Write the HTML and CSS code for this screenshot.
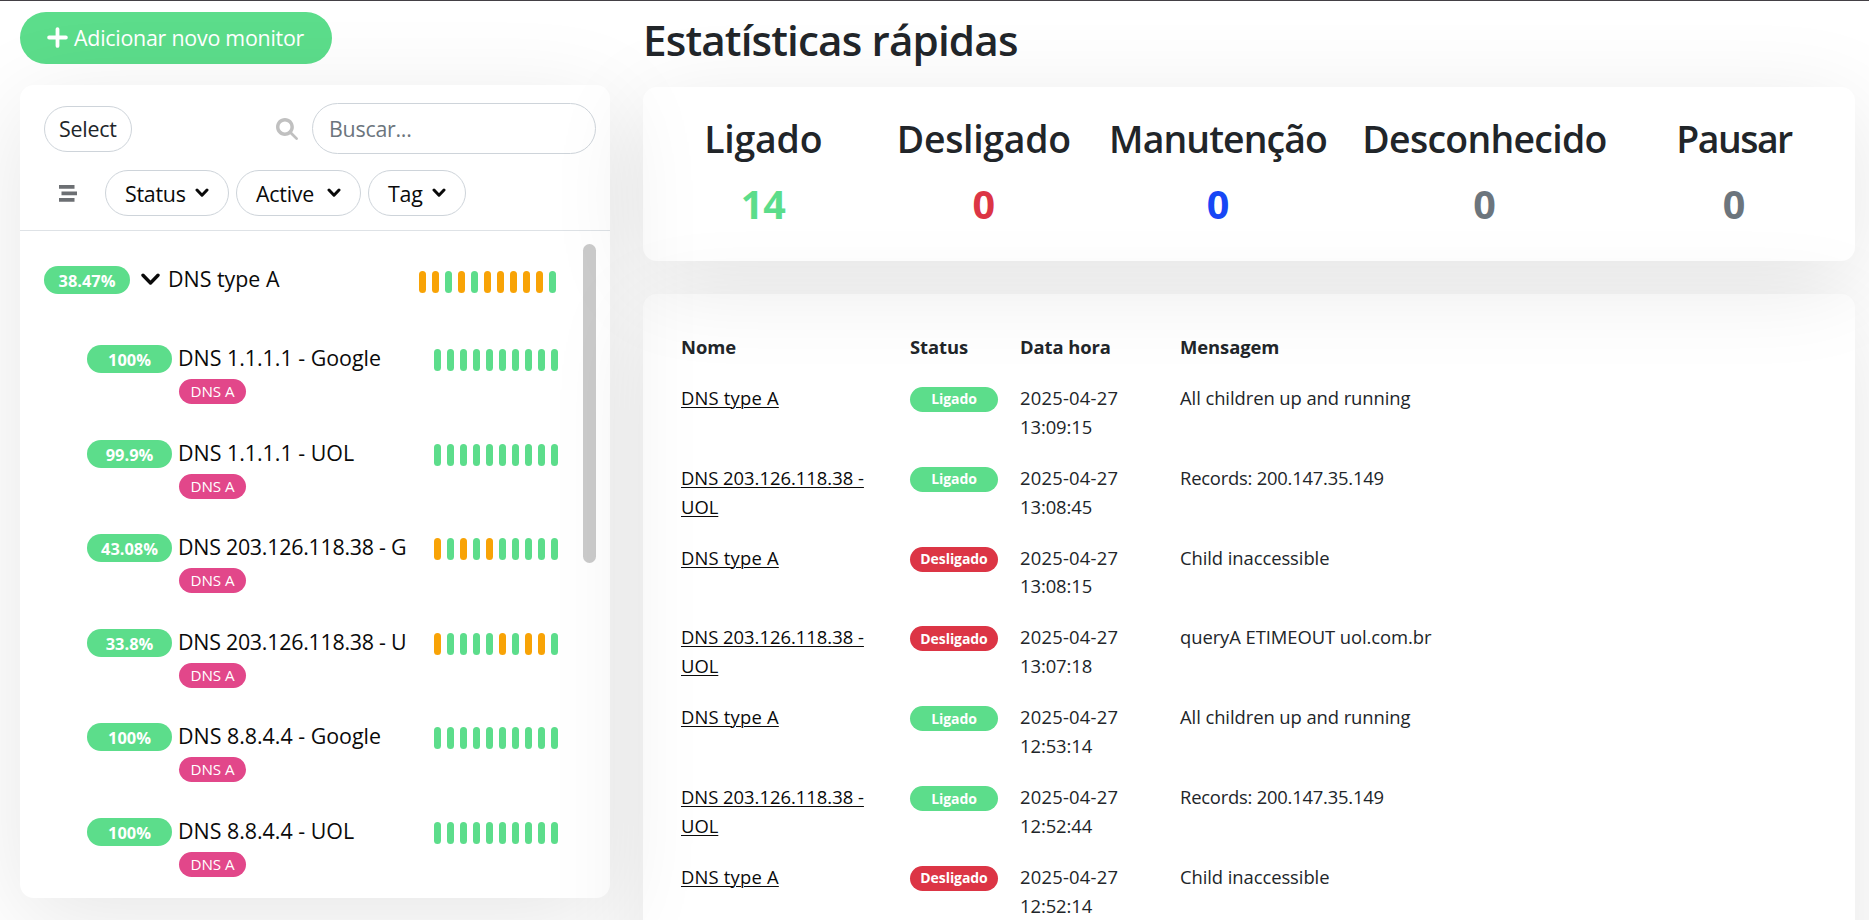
FILE: index.html
```html
<!DOCTYPE html>
<html lang="pt-BR">
<head>
<meta charset="utf-8">
<title>Uptime</title>
<link rel="stylesheet" href="styles.css">
</head>
<body>
<div class="layout">
  <aside class="side">
    <button class="add"><svg class="plus" viewBox="0 0 20 20"><path d="M10 2v16M2 10h16"/></svg><span class="add-text">Adicionar novo monitor</span></button>
    <section class="box monitors">
      <header class="list-header">
        <div class="search-row">
          <button class="chip select"><span>Select</span></button>
          <div class="search">
            <svg class="glass" viewBox="0 0 512 512"><path d="M416 208c0 45.9-14.9 88.3-40 122.7L502.600 457.400c12.500 12.500 12.500 32.800 0 45.300s-32.800 12.500-45.300 0L330.700 376c-34.400 25.200-76.800 40-122.700 40C93.100 416 0 322.900 0 208S93.100 0 208 0s208 93.100 208 208zM208 336a128 128 0 1 0 0-256 128 128 0 1 0 0 256z"/></svg>
            <div class="input"><span>Buscar...</span></div>
          </div>
        </div>
        <div class="filters">
          <svg class="stream" viewBox="0 0 18 17"><path d="M0 0h15.500v3.700H0zM2.500 6.500H18v3.700H2.500zM0 13h15.500v3.700H0z"/></svg>
          <button class="chip status"><span>Status</span><svg class="caret" viewBox="0 0 14 10"><path d="M2 2l5 5.200L12 2"/></svg></button>
          <button class="chip active"><span>Active</span><svg class="caret" viewBox="0 0 14 10"><path d="M2 2l5 5.200L12 2"/></svg></button>
          <button class="chip tag-filter"><span>Tag</span><svg class="caret" viewBox="0 0 14 10"><path d="M2 2l5 5.200L12 2"/></svg></button>
        </div>
      </header>
      <div class="list">
        <div class="items">
          <div class="item group">
            <span class="pct"><span>38.47%</span></span>
            <svg class="fold" viewBox="0 0 19 13"><path d="M2 2.300l7.500 7.700L17 2.300"/></svg>
            <div class="name"><span class="title">DNS type A</span></div>
            <div class="beats"><i class="w"></i><i class="w"></i><i></i><i class="w"></i><i></i><i class="w"></i><i class="w"></i><i class="w"></i><i class="w"></i><i class="w"></i><i></i></div>
          </div>
          <div class="item">
            <span class="pct"><span>100%</span></span>
            <div class="name"><span class="title">DNS 1.1.1.1 - Google</span><span class="tag"><span>DNS A</span></span></div>
            <div class="beats"><i></i><i></i><i></i><i></i><i></i><i></i><i></i><i></i><i></i><i></i></div>
          </div>
          <div class="item">
            <span class="pct"><span>99.9%</span></span>
            <div class="name"><span class="title">DNS 1.1.1.1 - UOL</span><span class="tag"><span>DNS A</span></span></div>
            <div class="beats"><i></i><i></i><i></i><i></i><i></i><i></i><i></i><i></i><i></i><i></i></div>
          </div>
          <div class="item">
            <span class="pct"><span>43.08%</span></span>
            <div class="name"><span class="title long">DNS 203.126.118.38 - G</span><span class="tag"><span>DNS A</span></span></div>
            <div class="beats"><i class="w"></i><i></i><i class="w"></i><i></i><i class="w"></i><i></i><i></i><i></i><i></i><i></i></div>
          </div>
          <div class="item">
            <span class="pct"><span>33.8%</span></span>
            <div class="name"><span class="title long">DNS 203.126.118.38 - U</span><span class="tag"><span>DNS A</span></span></div>
            <div class="beats"><i class="w"></i><i></i><i></i><i></i><i></i><i class="w"></i><i></i><i class="w"></i><i class="w"></i><i></i></div>
          </div>
          <div class="item">
            <span class="pct"><span>100%</span></span>
            <div class="name"><span class="title">DNS 8.8.4.4 - Google</span><span class="tag"><span>DNS A</span></span></div>
            <div class="beats"><i></i><i></i><i></i><i></i><i></i><i></i><i></i><i></i><i></i><i></i></div>
          </div>
          <div class="item">
            <span class="pct"><span>100%</span></span>
            <div class="name"><span class="title">DNS 8.8.4.4 - UOL</span><span class="tag"><span>DNS A</span></span></div>
            <div class="beats"><i></i><i></i><i></i><i></i><i></i><i></i><i></i><i></i><i></i><i></i></div>
          </div>
        </div>
        <div class="scrollbar"></div>
      </div>
    </section>
  </aside>
  <main class="main">
    <h1>Estatísticas rápidas</h1>
    <section class="box stats">
      <div class="stat"><h3 class="s-up">Ligado</h3><span class="num up">14</span></div>
      <div class="stat"><h3 class="s-down">Desligado</h3><span class="num down">0</span></div>
      <div class="stat"><h3 class="s-maint">Manutenção</h3><span class="num maint">0</span></div>
      <div class="stat"><h3 class="s-unknown">Desconhecido</h3><span class="num">0</span></div>
      <div class="stat"><h3 class="s-pause">Pausar</h3><span class="num">0</span></div>
    </section>
    <section class="box events">
      <table>
        <colgroup><col class="c-name"><col class="c-status"><col class="c-date"><col></colgroup>
        <thead><tr><th>Nome</th><th>Status</th><th>Data hora</th><th>Mensagem</th></tr></thead>
        <tbody>
          <tr><td><a>DNS type A</a></td><td><span class="badge">Ligado</span></td><td><span class="day">2025-04-27</span><br>13:09:15</td><td>All children up and running</td></tr>
          <tr><td><a class="wrapped">DNS 203.126.118.38 -<br>UOL</a></td><td><span class="badge">Ligado</span></td><td><span class="day">2025-04-27</span><br>13:08:45</td><td class="records">Records: 200.147.35.149</td></tr>
          <tr><td><a>DNS type A</a></td><td><span class="badge off">Desligado</span></td><td><span class="day">2025-04-27</span><br>13:08:15</td><td>Child inaccessible</td></tr>
          <tr><td><a class="wrapped">DNS 203.126.118.38 -<br>UOL</a></td><td><span class="badge off">Desligado</span></td><td><span class="day">2025-04-27</span><br>13:07:18</td><td>queryA ETIMEOUT uol.com.br</td></tr>
          <tr><td><a>DNS type A</a></td><td><span class="badge">Ligado</span></td><td><span class="day">2025-04-27</span><br>12:53:14</td><td>All children up and running</td></tr>
          <tr><td><a class="wrapped">DNS 203.126.118.38 -<br>UOL</a></td><td><span class="badge">Ligado</span></td><td><span class="day">2025-04-27</span><br>12:52:44</td><td class="records">Records: 200.147.35.149</td></tr>
          <tr><td><a>DNS type A</a></td><td><span class="badge off">Desligado</span></td><td><span class="day">2025-04-27</span><br>12:52:14</td><td>Child inaccessible</td></tr>
        </tbody>
      </table>
    </section>
  </main>
</div>
</body>
</html>
```
FILE: styles.css
```css
* { box-sizing: border-box; }
html { overflow: hidden; }
body {
  margin: 0;
  height: 920px;
  overflow: hidden;
  background: #fff;
  color: #212529;
  font-family: "Open Sans", "Noto Sans", sans-serif;
  font-size: 21.4px;
  border-top: 1px solid #434045;
}
button { font: inherit; color: inherit; background: none; padding: 0; }
h1, h3 { margin: 0; font-weight: 600; white-space: nowrap; }
.layout { display: flex; gap: 33px; padding: 0 14px 0 20px; }
.side { width: 590px; padding-top: 11px; }
.main { width: 1212px; }
.box { border-radius: 14px; box-shadow: 0 20.6px 96px rgba(0, 0, 0, .1); }

.add {
  display: flex;
  align-items: center;
  width: 312px;
  height: 52px;
  padding: 0 0 1px 27px;
  border: 0;
  border-radius: 26px;
  background: #5cdd8b;
  color: #fff;
}
.plus { width: 21px; height: 21px; margin-right: 6px; fill: none; stroke: #fff; stroke-width: 3.6; stroke-linecap: round; }
.add-text { letter-spacing: -.24px; white-space: nowrap; }

.monitors { margin-top: 21px; height: 813px; }
.list-header { height: 146px; padding: 18px 14px 0 24px; border-bottom: 1px solid #dee2e6; letter-spacing: -.25px; }
.search-row { display: flex; justify-content: space-between; align-items: center; height: 51px; }
.search { display: flex; align-items: center; }
.glass { width: 22px; height: 22px; margin-right: 14px; fill: #c0c0c0; }
.input {
  display: flex;
  align-items: center;
  width: 284px;
  height: 51px;
  padding-left: 16px;
  border: 1px solid #ced4da;
  border-radius: 25.500px;
  color: #6c757d;
}
.chip {
  display: flex;
  align-items: center;
  height: 46px;
  border: 1px solid #ced4da;
  border-radius: 23px;
  letter-spacing: -.25px;
  white-space: nowrap;
}
.select { width: 88px; padding-left: 14px; }
.filters { display: flex; align-items: center; gap: 7px; margin-top: 16px; padding-left: 15px; }
.stream { width: 18px; height: 17px; margin-right: 21px; fill: #6c6f73; }
.filters .chip { padding: 0 19px; justify-content: space-between; color: #0a0a0a; }
.status { width: 124px; }
.active { width: 125px; }
.tag-filter { width: 98px; }
.caret { width: 14px; height: 10px; fill: none; stroke: #0a0a0a; stroke-width: 3; stroke-linecap: round; stroke-linejoin: round; }

.list { display: flex; justify-content: space-between; padding: 13px 14px 0 24px; }
.scrollbar { width: 13px; height: 319px; border-radius: 7px; background: #cbcbcb; }
.items { width: 515px; padding-top: 22px; }
.item { display: flex; height: 94.600px; padding-left: 43px; color: #0a0a0a; }
.item.group { height: 79px; padding-left: 0; }
.pct {
  display: flex;
  align-items: center;
  justify-content: center;
  flex: none;
  width: 85px;
  height: 28px;
  padding-top: 1px;
  margin-right: 7px;
  border-radius: 14px;
  background: #5cdd8b;
  color: #fff;
  font-size: 16.400px;
  font-weight: 700;
}
.group .pct { width: 86px; margin-right: 11px; }
.fold { flex: none; width: 19px; height: 13px; margin: 7px 9px 0 0; fill: none; stroke: #0a0a0a; stroke-width: 3.400; stroke-linecap: round; stroke-linejoin: round; }
.name { width: 227px; }
.group .name { width: 237px; }
.title { display: block; height: 34px; line-height: 27px; margin-top: -1px; margin-left: -1px; white-space: nowrap; }
.long { letter-spacing: -.25px; }
.tag {
  display: flex;
  align-items: center;
  justify-content: center;
  width: 67px;
  height: 25px;
  padding-bottom: 1px;
  margin-top: 1px;
  border-radius: 12.500px;
  background: #e2478a;
  color: #fff;
  font-size: 15.200px;
  letter-spacing: -.1px;
}
.beats { display: flex; gap: 6px; margin: 4px 0 0 28px; }
.group .beats { margin: 5px 0 0 13px; }
.beats i { width: 7px; height: 22px; border-radius: 3.500px; background: #5cdd8b; }
.beats .w { background: #f8a306; }

h1 { height: 86px; padding-top: 10px; font-size: 42.200px; line-height: 57px; letter-spacing: -.85px; }
.stats { display: grid; grid-template-columns: 220.500px 220.500px 248px 285px 214px; height: 174px; padding: 27px 0 0 10px; }
.stat { display: flex; flex-direction: column; align-items: center; }
.stat h3 { font-size: 37.400px; line-height: 50px; }
.s-up { letter-spacing: -.2px; }
.s-down { letter-spacing: -.3px; }
.s-maint { letter-spacing: -.9px; }
.s-unknown { letter-spacing: -.7px; }
.s-pause { letter-spacing: -1.500px; }
.num { margin-top: 14px; font-size: 39.500px; line-height: 52px; font-weight: 700; color: #6c757d; }
.up { color: #5cdd8b; }
.down { color: #dc3545; }
.maint { color: #1747f5; }

.events { margin-top: 33px; height: 700px; padding: 28px 27px 0; }
table { width: 100%; table-layout: fixed; border-collapse: collapse; font-size: 18.400px; line-height: 28.900px; letter-spacing: -.07px; }
.c-name { width: 229px; }
.c-status { width: 110px; }
.c-date { width: 160px; }
th, td { padding: 11px 0 11px 11px; text-align: left; vertical-align: top; white-space: nowrap; }
td { height: 79.800px; }
td a { color: #0a0a0a; letter-spacing: .2px; text-decoration: underline; text-underline-offset: 2px; text-decoration-thickness: 1px; }
td a.wrapped { letter-spacing: 0; }
.records { letter-spacing: -.22px; }
.day { letter-spacing: .22px; }
.badge {
  display: flex;
  align-items: center;
  justify-content: center;
  width: 88px;
  height: 25px;
  padding-top: 1px;
  margin-top: 3px;
  border-radius: 12.500px;
  background: #5cdd8b;
  color: #fff;
  font-size: 14px;
  font-weight: 700;
}
.off { background: #dc3545; }
```
